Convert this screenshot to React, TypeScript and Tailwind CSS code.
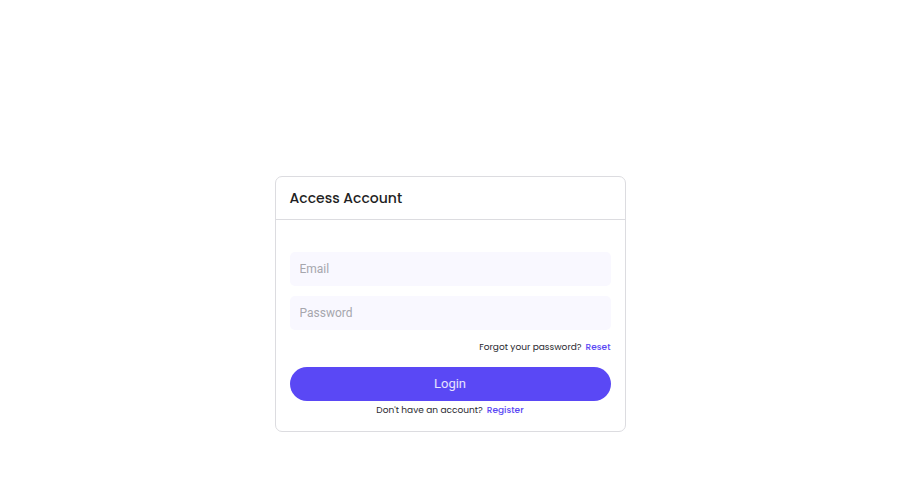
export default function App() {
  return (
    <div className="w-full h-[500px] bg-white flex items-start justify-center pt-[176px] font-['Poppins','Lato','Noto_Sans',sans-serif]">
      <div className="w-[351px] border border-[#dcdce0] rounded-[7px] bg-white">
        <div className="h-[43px] px-[14px] flex items-center border-b border-[#dcdce0]">
          <h2 className="text-[14px] font-medium text-[#1f1f24]">Access Account</h2>
        </div>
        <div className="px-[14px] pt-[32px] pb-[14px]">
          <input
            placeholder="Email"
            className="w-full h-[34px] px-[10px] rounded-[5px] bg-[#f9f8ff] text-[12px] font-['Roboto',sans-serif] placeholder-[#a6a6ad] outline-none"
          />
          <input
            type="password"
            placeholder="Password"
            className="mt-[10px] w-full h-[34px] px-[10px] rounded-[5px] bg-[#f9f8ff] text-[12px] font-['Roboto',sans-serif] placeholder-[#a6a6ad] outline-none"
          />
          <div className="mt-[10px] flex justify-end gap-[4px] text-[9px] leading-[14px]">
            <span className="text-[#2a2a30]">Forgot your password?</span>
            <a className="text-[#5a48f4] font-medium">Reset</a>
          </div>
          <button className="mt-[13px] w-full h-[34px] rounded-full bg-[#5a48f5] text-white/85 text-[13px] font-['Roboto',sans-serif]">
            Login
          </button>
          <div className="mt-[2px] flex justify-center gap-[4px] text-[9px] leading-[14px]">
            <span className="text-[#2a2a30]">Don't have an account?</span>
            <a className="text-[#5a48f4] font-medium">Register</a>
          </div>
        </div>
      </div>
    </div>
  );
}
